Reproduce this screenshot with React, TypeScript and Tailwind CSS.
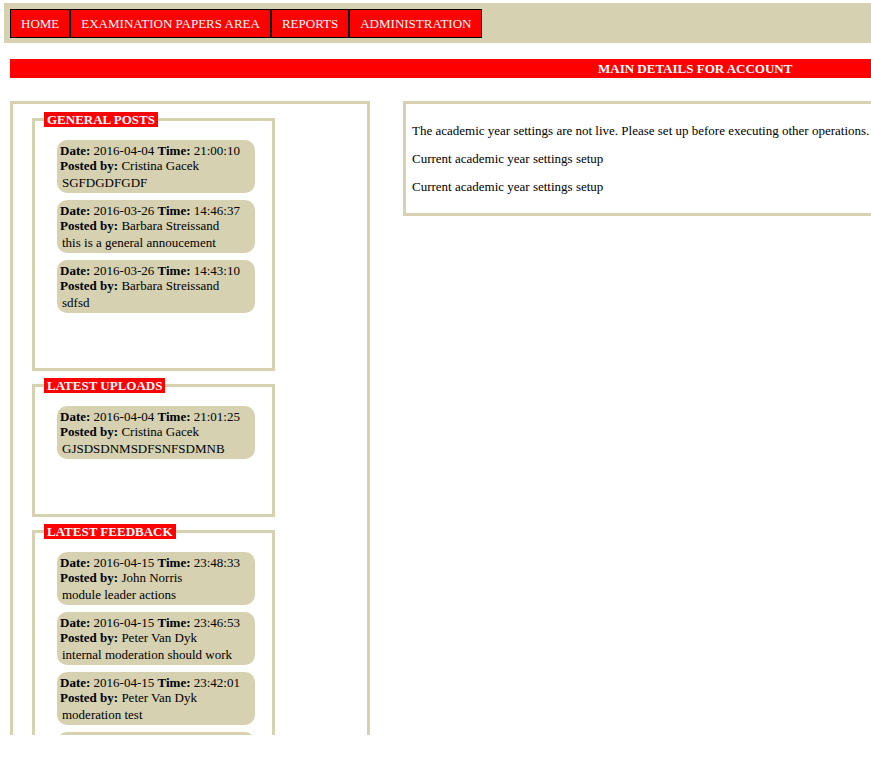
import React from "react";

type Post = { date: string; time: string; by: string; text: string };

const generalPosts: Post[] = [
  { date: "2016-04-04", time: "21:00:10", by: "Cristina Gacek", text: "SGFDGDFGDF" },
  { date: "2016-03-26", time: "14:46:37", by: "Barbara Streissand", text: "this is a general annoucement" },
  { date: "2016-03-26", time: "14:43:10", by: "Barbara Streissand", text: "sdfsd" },
];

const uploads: Post[] = [
  { date: "2016-04-04", time: "21:01:25", by: "Cristina Gacek", text: "GJSDSDNMSDFSNFSDMNB" },
];

const feedback: Post[] = [
  { date: "2016-04-15", time: "23:48:33", by: "John Norris", text: "module leader actions" },
  { date: "2016-04-15", time: "23:46:53", by: "Peter Van Dyk", text: "internal moderation should work" },
  { date: "2016-04-15", time: "23:42:01", by: "Peter Van Dyk", text: "moderation test" },
  { date: "2016-04-15", time: "23:40:12", by: "Peter Van Dyk", text: "moderation" },
];

const menu = ["HOME", "EXAMINATION PAPERS AREA", "REPORTS", "ADMINISTRATION"];

const PostCard = ({ post }: { post: Post }) => (
  <div className="bg-[#d6d1b0] rounded-[10px] pt-[3px] pb-[3px] pl-[3px] w-[198px] leading-[15px]">
    <div>
      <b>Date:</b> {post.date} <b>Time:</b> {post.time}
    </div>
    <div>
      <b>Posted by:</b> {post.by}
    </div>
    <div className="pl-[2px] mt-[2px]">{post.text}</div>
  </div>
);

const Section = ({ title, posts }: { title: string; posts: Post[] }) => (
  <fieldset className="border-[3px] border-[#d6d1b0] w-[243px] pl-[9px] pb-[55px] mb-[7px]">
    <legend className="bg-[#ff0000] text-white font-bold px-[3px] leading-[15px]">{title}</legend>
    <div className="flex flex-col gap-[7px] pl-[13px] pt-[13px]">
      {posts.map((post, index) => {
        return <PostCard key={index} post={post} />;
      })}
    </div>
  </fieldset>
);

const App = () => {
  return (
    <div className="h-[735px] w-[871px] overflow-hidden bg-white text-black text-[13px] font-['Liberation_Serif',serif]">
      <div className="w-[1400px]">
        <nav className="ml-[4px] mt-[3px] h-[40px] bg-[#d6d1b0] pl-[6px] pt-[6px]">
          <ul className="flex">
            {menu.map((item) => (
              <li
                key={item}
                className="bg-[#ff0000] border border-black text-white text-[13px] h-[29px] leading-[27px] px-[10px]"
              >
                {item}
              </li>
            ))}
          </ul>
        </nav>
        <div className="ml-[10px] mt-[16px] h-[19px] bg-[#ff0000] text-white font-bold leading-[19px] pl-[588px]">
          MAIN DETAILS FOR ACCOUNT
        </div>
        <div className="flex items-start gap-[33px] ml-[10px] mt-[23px]">
          <aside className="w-[360px] border-[3px] border-[#d6d1b0] pl-[19px] pt-[8px] pb-[20px]">
            <Section title="GENERAL POSTS" posts={generalPosts} />
            <Section title="LATEST UPLOADS" posts={uploads} />
            <Section title="LATEST FEEDBACK" posts={feedback} />
          </aside>
          <main className="w-[960px] border-[3px] border-[#d6d1b0] px-[6px] py-[6px] leading-[15px]">
            <p className="my-[13px]">
              The academic year settings are not live. Please set up before executing other operations.
            </p>
            <p className="my-[13px]">Current academic year settings setup</p>
            <p className="my-[13px]">Current academic year settings setup</p>
          </main>
        </div>
      </div>
    </div>
  );
};

export default App;
